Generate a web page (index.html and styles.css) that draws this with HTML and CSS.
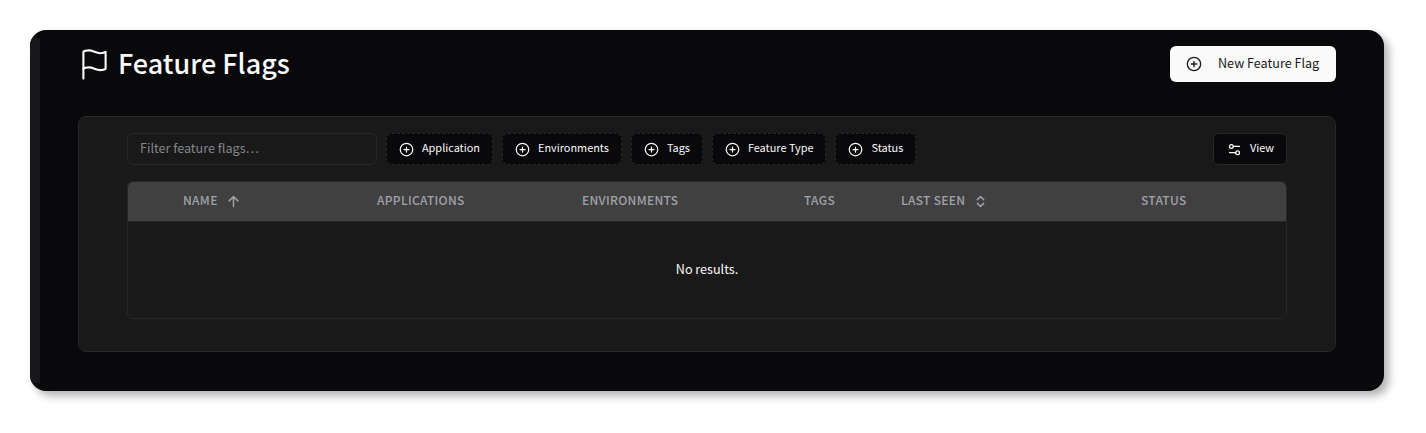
FILE: index.html
```html
<!DOCTYPE html>
<html lang="en">
<head>
<meta charset="utf-8">
<title>Feature Flags</title>
<link rel="stylesheet" href="styles.css">
</head>
<body>
<div class="window">
  <aside class="rail"></aside>
  <main class="main">
    <header class="page-head">
      <h1 class="title">
        <svg class="flag" viewBox="3 1 18 22" preserveAspectRatio="none" fill="none" stroke="currentColor" stroke-width="1.5" stroke-linecap="round" stroke-linejoin="round"><path d="M4 15s1-1 4-1 5 2 8 2 4-1 4-1V3s-1 1-4 1-5-2-8-2-4 1-4 1z"/><line x1="4" y1="22" x2="4" y2="15"/></svg>
        <span class="title-text">Feature Flags</span>
      </h1>
      <button class="new-btn">
        <svg class="ico16" viewBox="0 0 24 24" fill="none" stroke="currentColor" stroke-width="2" stroke-linecap="round" stroke-linejoin="round"><circle cx="12" cy="12" r="10"/><path d="M8 12h8M12 8v8"/></svg>
        <span class="lift">New Feature Flag</span>
      </button>
    </header>
    <section class="card">
      <div class="toolbar">
        <div class="filter">Filter feature flags…</div>
        <button class="facet"><svg class="ico15" viewBox="0 0 24 24" fill="none" stroke="currentColor" stroke-width="2" stroke-linecap="round" stroke-linejoin="round"><circle cx="12" cy="12" r="10"/><path d="M8 12h8M12 8v8"/></svg><span class="lift">Application</span></button>
        <button class="facet"><svg class="ico15" viewBox="0 0 24 24" fill="none" stroke="currentColor" stroke-width="2" stroke-linecap="round" stroke-linejoin="round"><circle cx="12" cy="12" r="10"/><path d="M8 12h8M12 8v8"/></svg><span class="lift">Environments</span></button>
        <button class="facet"><svg class="ico15" viewBox="0 0 24 24" fill="none" stroke="currentColor" stroke-width="2" stroke-linecap="round" stroke-linejoin="round"><circle cx="12" cy="12" r="10"/><path d="M8 12h8M12 8v8"/></svg><span class="lift">Tags</span></button>
        <button class="facet"><svg class="ico15" viewBox="0 0 24 24" fill="none" stroke="currentColor" stroke-width="2" stroke-linecap="round" stroke-linejoin="round"><circle cx="12" cy="12" r="10"/><path d="M8 12h8M12 8v8"/></svg><span class="lift">Feature Type</span></button>
        <button class="facet"><svg class="ico15" viewBox="0 0 24 24" fill="none" stroke="currentColor" stroke-width="2" stroke-linecap="round" stroke-linejoin="round"><circle cx="12" cy="12" r="10"/><path d="M8 12h8M12 8v8"/></svg><span class="lift">Status</span></button>
        <button class="view"><svg class="ico15" viewBox="0 0 24 24" fill="none" stroke="currentColor" stroke-width="2" stroke-linecap="round" stroke-linejoin="round"><path d="M14 17H4M20 7h-10"/><circle cx="17" cy="17" r="3"/><circle cx="7" cy="7" r="3"/></svg><span class="lift">View</span></button>
      </div>
      <div class="table">
        <div class="thead">
          <div class="th th-name"><span class="lift">NAME</span><svg class="ico15" viewBox="0 0 24 24" fill="none" stroke="currentColor" stroke-width="2.4" stroke-linecap="round" stroke-linejoin="round"><path d="M12 20V4M5 11l7-7 7 7"/></svg></div>
          <div class="th"><span class="lift">APPLICATIONS</span></div>
          <div class="th"><span class="lift">ENVIRONMENTS</span></div>
          <div class="th"><span class="lift">TAGS</span></div>
          <div class="th"><span class="lift">LAST SEEN</span><svg class="ico15" viewBox="0 0 24 24" fill="none" stroke="currentColor" stroke-width="2.4" stroke-linecap="round" stroke-linejoin="round"><path d="M7 15l5 5 5-5M7 9l5-5 5 5"/></svg></div>
          <div class="th"><span class="lift">STATUS</span></div>
        </div>
        <div class="empty"><span class="lift">No results.</span></div>
      </div>
    </section>
  </main>
</div>
</body>
</html>
```

FILE: styles.css
```css
* { box-sizing: border-box; }
html, body { margin: 0; padding: 0; background: #fff; }
body {
  padding: 30px 42px 42px 30px;
  font-family: "Noto Sans CJK SC", "Noto Sans", sans-serif;
  color: #fafafa;
}
button { font: inherit; color: inherit; cursor: pointer; }
.lift { padding-bottom: 4px; }
.window {
  height: 361px;
  background: #09090b;
  border-radius: 16px;
  box-shadow: 5px 5px 8px rgba(0, 0, 0, .3);
  display: flex;
  overflow: hidden;
}
.rail { width: 10px; margin: 8px 0; background: #18181b; flex: none; }
.main { flex: 1; padding: 16px 48px 0 38px; min-width: 0; }
.page-head { display: flex; justify-content: space-between; align-items: center; height: 36px; }
.title { display: flex; align-items: center; gap: 11px; margin: 0 0 0 4px; font-size: 27px; font-weight: 500; line-height: 34px; }
.title-text { padding-bottom: 2px; }
.flag { width: 25px; height: 31px; flex: none; }
.new-btn {
  width: 166px; height: 36px; background: #fafafa; color: #18181b; border: 0; border-radius: 6px;
  display: flex; align-items: center; padding: 0 16px; gap: 16px; font-size: 12.6px; font-weight: 400; white-space: nowrap;
}
.ico16 { width: 16px; height: 16px; flex: none; }
.ico15 { width: 15px; height: 15px; flex: none; }
.card {
  margin-top: 34px; height: 236px; background: #191919; border: 1px solid #27272a; border-radius: 8px;
  padding: 16px 48px 0;
}
.toolbar { display: flex; align-items: center; gap: 9px; height: 32px; }
.filter {
  width: 250px; height: 32px; border: 1px solid #27272a; border-radius: 6px; padding: 0 12px;
  font-size: 12.6px; line-height: 28px; color: #85858c;
}
.facet {
  height: 32px; background: #09090b; border: 1px dashed #27272a; border-radius: 6px;
  display: flex; align-items: center; gap: 8px; padding: 0 12px; font-size: 10.9px; font-weight: 400; white-space: nowrap;
}
.view {
  margin-left: auto; height: 32px; background: #09090b; border: 1px solid #27272a; border-radius: 6px;
  display: flex; align-items: center; gap: 8px; padding: 0 12px 0 13px; font-size: 10.9px;
}
.table { margin-top: 16px; height: 138px; border: 1px solid #27272a; border-radius: 6px; overflow: hidden; background: #191919; }
.thead {
  height: 40px; background: #404040; border-bottom: 1px solid #27272a; display: grid;
  grid-template-columns: 249px 205px 222px 97px 240px 1fr; align-items: center; color: #a1a1aa;
  font-size: 12px; font-weight: 500; letter-spacing: .3px;
}
.th { display: flex; align-items: center; gap: 8px; }
.th-name { padding-left: 55px; }
.empty { height: 96px; display: flex; align-items: center; justify-content: center; font-size: 12.6px; }
```
